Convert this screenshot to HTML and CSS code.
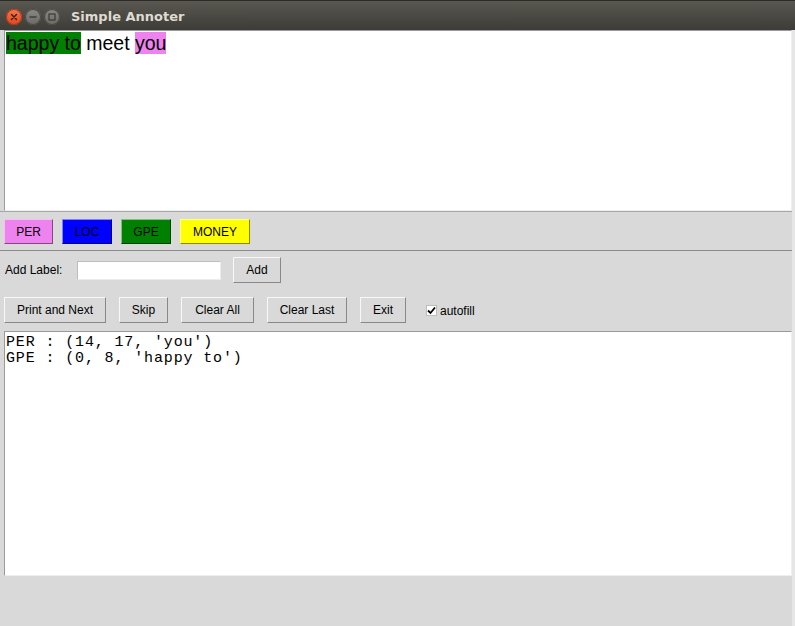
FILE: index.html
```html
<!DOCTYPE html>
<html>
<head>
<meta charset="utf-8">
<link rel="stylesheet" href="styles.css">
</head>
<body>
<div class="titlebar">
  <div class="controls">
    <span class="ctl close"><svg width="16" height="16" viewBox="0 0 16 16"><path d="M5.5 5.5 L10.5 10.5 M10.5 5.5 L5.5 10.5" stroke="#3a1a0e" stroke-width="1.4" stroke-linecap="round"/></svg></span>
    <span class="ctl"><svg width="16" height="16" viewBox="0 0 16 16"><path d="M4.5 8 H11.5" stroke="#3b3a36" stroke-width="1.4"/></svg></span>
    <span class="ctl"><svg width="16" height="16" viewBox="0 0 16 16"><rect x="5" y="5" width="6" height="6" fill="none" stroke="#3b3a36" stroke-width="1.2"/></svg></span>
  </div>
  <div class="title">Simple Annoter</div>
</div>
<div class="window">
  <div class="editor-frame">
    <div class="editor"><span class="hl-gpe">happy to</span> meet <span class="hl-per">you</span></div>
  </div>
  <div class="labels">
    <button class="btn lbl per">PER</button>
    <button class="btn lbl loc">LOC</button>
    <button class="btn lbl gpe">GPE</button>
    <button class="btn lbl money">MONEY</button>
  </div>
  <div class="add-row">
    <span class="add-label">Add Label:</span>
    <input class="entry" type="text">
    <button class="btn add">Add</button>
  </div>
  <div class="actions">
    <button class="btn w-print">Print and Next</button>
    <button class="btn w-skip">Skip</button>
    <button class="btn w-clearall">Clear All</button>
    <button class="btn w-clearlast">Clear Last</button>
    <button class="btn w-exit">Exit</button>
    <label class="check"><span class="box"><svg width="9" height="9" viewBox="0 0 9 9"><path d="M1 4.5 L3.5 7 L8 1.5" fill="none" stroke="#000" stroke-width="1.8"/></svg></span>autofill</label>
  </div>
  <div class="output">PER : (14, 17, 'you')
GPE : (0, 8, 'happy to')</div>
</div>
</body>
</html>
```
FILE: styles.css
```css
html, body {
  margin: 0;
  padding: 0;
}
body {
  width: 795px;
  height: 626px;
  overflow: hidden;
  background: #d9d9d9;
  font-family: "Liberation Sans", Arial, sans-serif;
  font-size: 12px;
  color: #000;
}
.titlebar {
  height: 30px;
  display: flex;
  align-items: center;
  background: linear-gradient(#595750, #3d3c37);
  border-top: 1px solid #2c2b28;
  box-sizing: border-box;
}
.controls {
  display: flex;
  gap: 3px;
  padding-left: 6px;
  padding-top: 3px;
}
.ctl {
  width: 16px;
  height: 16px;
  border-radius: 50%;
  background: linear-gradient(#8a8984, #6a6964);
  box-shadow: inset 0 0 0 1px #4a4944;
  display: flex;
}
.ctl.close {
  background: linear-gradient(#f47a4e, #e0461a);
  box-shadow: inset 0 0 0 1px #a8391a;
}
.title {
  margin-left: 11px;
  padding-top: 1px;
  font-family: "DejaVu Sans", sans-serif;
  font-weight: bold;
  font-size: 13px;
  color: #dfdbd2;
}
.window {
  border-right: 3px solid #e6e6e6;
  height: 596px;
}
.editor-frame {
  padding: 0 0 0 4px;
  border-bottom: 1px solid #a6a6a6;
}
.editor {
  height: 178px;
  background: #fff;
  border-top: 1px solid #9a9a9a;
  border-left: 1px solid #9a9a9a;
  border-bottom: 1px solid #eeeeee;
  border-right: 1px solid #eeeeee;
  font-size: 19.5px;
  line-height: 22px;
  padding: 1px 0 0 1px;
  box-sizing: content-box;
}
.hl-gpe { background: #008000; }
.hl-per { background: #ee82ee; }
.btn {
  font-family: "Liberation Sans", Arial, sans-serif;
  font-size: 12px;
  color: #000;
  background: #d9d9d9;
  border-style: solid;
  border-width: 1px;
  border-color: #f8f8f8 #888888 #888888 #f8f8f8;
  padding: 0;
  margin: 0;
  height: 26px;
  box-sizing: border-box;
}
.labels {
  display: flex;
  gap: 9px;
  padding: 7px 0 6px 4px;
  border-bottom: 1px solid #8a8a8a;
}
.lbl {
  height: 25px;
  border-color: rgba(255,255,255,0.5) rgba(0,0,0,0.45) rgba(0,0,0,0.45) rgba(255,255,255,0.5);
}
.per { width: 49px; background: #ee82ee; }
.loc { width: 50px; background: #0000ff; }
.gpe { width: 50px; background: #008000; }
.money { width: 70px; background: #ffff00; }
.add-row {
  display: flex;
  align-items: center;
  padding: 6px 0 0 5px;
  height: 26px;
}
.add-label { width: 72px; }
.entry {
  width: 144px;
  height: 19px;
  box-sizing: border-box;
  border-style: solid;
  border-width: 1px;
  border-color: #bdbdbd #ececec #ececec #bdbdbd;
  background: #fff;
  margin: 0;
  padding: 0;
  outline: none;
}
.add {
  width: 48px;
  margin-left: 12px;
}
.actions {
  display: flex;
  align-items: center;
  gap: 13px;
  padding: 14px 0 0 4px;
  height: 26px;
}
.w-print { width: 102px; }
.w-skip { width: 49px; }
.w-clearall { width: 73px; }
.w-clearlast { width: 80px; }
.w-exit { width: 46px; }
.check {
  display: flex;
  align-items: center;
  margin-left: 7px;
  padding-top: 1px;
}
.box {
  width: 11px;
  height: 11px;
  box-sizing: border-box;
  background: #fff;
  border: 1px solid #bdbdbd;
  display: flex;
  align-items: center;
  justify-content: center;
  margin-right: 3px;
}
.output {
  margin: 8px 0 0 4px;
  height: 240px;
  background: #fff;
  border-top: 1px solid #9a9a9a;
  border-left: 1px solid #9a9a9a;
  border-bottom: 1px solid #eeeeee;
  border-right: 1px solid #eeeeee;
  font-family: "Liberation Mono", "Courier New", monospace;
  font-size: 15px;
  letter-spacing: 0.86px;
  line-height: 16px;
  white-space: pre;
  padding: 3px 0 0 1px;
}
```
